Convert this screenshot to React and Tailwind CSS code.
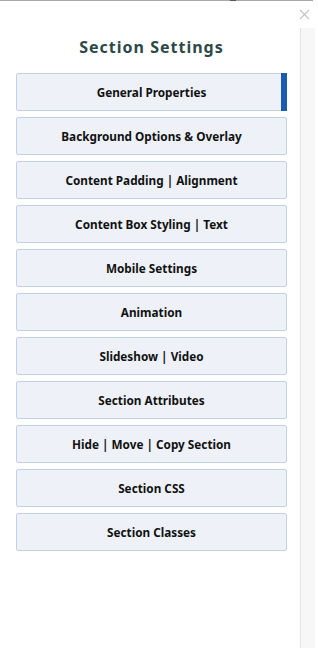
const sections = [
  "General Properties",
  "Background Options & Overlay",
  "Content Padding | Alignment",
  "Content Box Styling | Text",
  "Mobile Settings",
  "Animation",
  "Slideshow | Video",
  "Section Attributes",
  "Hide | Move | Copy Section",
  "Section CSS",
  "Section Classes",
];

export default function App() {
  return (
    <div className="relative w-[318px] h-[648px] bg-white overflow-hidden font-['Noto_Sans',sans-serif]">
      <div className="flex h-px w-[313px] bg-[#a8a8a8]">
        <span className="ml-[230px] w-[6px] bg-[#555]" />
      </div>
      <button
        aria-label="Close"
        className="absolute top-[8px] right-[8px] w-[12px] h-[12px] flex items-center justify-center"
      >
        <svg width="11" height="11" viewBox="0 0 11 11" stroke="#c4c4c4" strokeWidth="1.2">
          <path d="M1 1L10 10M10 1L1 10" />
        </svg>
      </button>
      <div className="flex h-[647px]">
        <div className="w-[300px] flex flex-col">
          <h2 className="mt-[34px] pl-[3px] text-center text-[16px] font-bold tracking-[1px] text-[#2c4848] leading-[24px]">
            Section Settings
          </h2>
          <div className="mt-[14px] ml-4 w-[271px] flex flex-col gap-[6px]">
            {sections.map((s, i) => (
              <button
                key={s}
                className="relative h-[38px] pt-px bg-[#eef1f8] border border-[#c3d1e8] rounded-[2px] text-[11.75px] font-bold text-[#111] flex items-center justify-center"
              >
                {s}
                {i === 0 && (
                  <span className="absolute -top-px -right-px -bottom-px w-[6px] bg-[#1a5cb0]" />
                )}
              </button>
            ))}
          </div>
        </div>
        <div className="mt-[27px] w-[15px] bg-[#f7f7f7] border-l border-[#e3e3e3]" />
      </div>
    </div>
  );
}
